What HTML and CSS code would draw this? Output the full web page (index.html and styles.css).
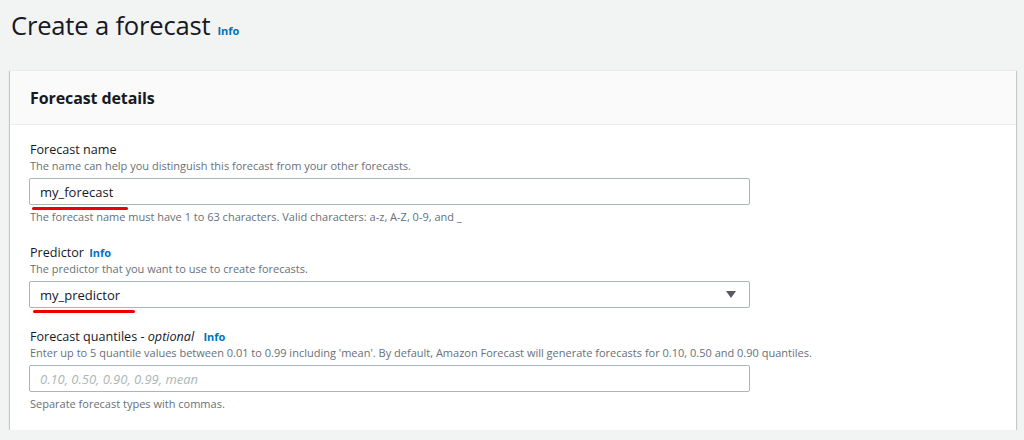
FILE: index.html
```
<!DOCTYPE html>
<html lang="en">
<head>
	<meta charset="UTF-8">
	<title>Create a forecast</title>
	<link rel="stylesheet" href="styles.css">
</head>
<body>

	<div class="page-head">
		<h1 class="page-title">Create a forecast</h1>
		<a class="info-link">Info</a>
	</div>

	<div class="card">
		<div class="card-header">
			<h2>Forecast details</h2>
		</div>
		<div class="card-body">

			<div class="field">
				<div class="field-label">Forecast name</div>
				<div class="field-desc">The name can help you distinguish this forecast from your other forecasts.</div>
				<div class="control">
					<div class="input">my_forecast</div>
					<span class="mark mark-name"></span>
				</div>
				<div class="field-hint">The forecast name must have 1 to 63 characters. Valid characters: a-z, A-Z, 0-9, and _</div>
			</div>

			<div class="field">
				<div class="field-label">Predictor <a class="info-link">Info</a></div>
				<div class="field-desc">The predictor that you want to use to create forecasts.</div>
				<div class="control">
					<div class="input select">
						<span>my_predictor</span>
						<svg class="caret" width="10" height="7" viewBox="0 0 10 7"><path d="M0 0 H10 L5 7 Z" fill="#545b64"/></svg>
					</div>
					<span class="mark mark-pred"></span>
				</div>
			</div>

			<div class="field">
				<div class="field-label">Forecast quantiles - <i>optional</i> <a class="info-link">Info</a></div>
				<div class="field-desc">Enter up to 5 quantile values between 0.01 to 0.99 including 'mean'. By default, Amazon Forecast will generate forecasts for 0.10, 0.50 and 0.90 quantiles.</div>
				<div class="control">
					<div class="input placeholder">0.10, 0.50, 0.90, 0.99, mean</div>
				</div>
				<div class="field-hint">Separate forecast types with commas.</div>
			</div>

		</div>
	</div>

</body>
</html>
```

FILE: styles.css
```
body {
  margin: 0;
  background: #f2f3f3;
  font-family: "Open Sans", "Noto Sans", Arial, sans-serif;
  color: #16191f;
}

/* 页面标题 */
.page-head {
  display: flex;
  align-items: baseline;
  padding: 8px 0 0 11px;
  height: 70px;
  box-sizing: border-box;
}
.page-title {
  margin: 0;
  font-size: 25.6px;
  font-weight: 400;
  line-height: 36px;
  letter-spacing: -0.2px;
}
.info-link {
  color: #0073bb;
  font-size: 11px;
  font-weight: 700;
  margin-left: 6px;
}
.page-title + .info-link {
  margin-left: 7px;
}

/* 卡片 */
.card {
  margin: 0 8px 0 10px;
  background: #fff;
  border-top: 1px solid #eaeded;
  box-shadow: 0 1px 1px 0 rgba(0, 28, 36, .3), 1px 1px 1px 0 rgba(0, 28, 36, .15), -1px 1px 1px 0 rgba(0, 28, 36, .15);
}
.card-header {
  background: #fafafa;
  border-bottom: 1px solid #eaeded;
  height: 53px;
  display: flex;
  align-items: center;
  padding: 0 20px;
}
.card-header h2 {
  margin: 0;
  font-size: 16px;
  font-weight: 700;
  letter-spacing: -0.1px;
}
.card-body {
  padding: 16px 19px 19px 19px;
  display: flex;
  flex-direction: column;
  gap: 20px;
}

/* 表单项 */
.field-label {
  font-size: 12.6px;
  line-height: 18px;
  padding-left: 1px;
}
.field-label .info-link {
  margin-left: 2px;
}
.field-label i + .info-link {
  margin-left: 6px;
}
.field-desc,
.field-hint {
  font-size: 11px;
  line-height: 14px;
  color: #687078;
  padding-left: 1px;
}
.field-desc {
  margin-bottom: 5px;
}
.field-hint {
  margin-top: 5px;
}

.control {
  position: relative;
  width: 721px;
}
.input {
  height: 27px;
  box-sizing: border-box;
  border: 1px solid #aab7b8;
  border-radius: 2px;
  padding: 0 10px;
  display: flex;
  align-items: center;
  font-size: 13px;
  background: #fff;
}
.select {
  justify-content: space-between;
  padding-right: 13px;
}
.placeholder {
  color: #aab7b8;
  font-style: italic;
}

/* 红色标注线 */
.mark {
  position: absolute;
  height: 3px;
  border-radius: 2px;
  background: #ee0000;
}
.mark-name {
  left: 3px;
  width: 96px;
  top: 29px;
}
.mark-pred {
  left: 4px;
  width: 102px;
  top: 29px;
}
```
